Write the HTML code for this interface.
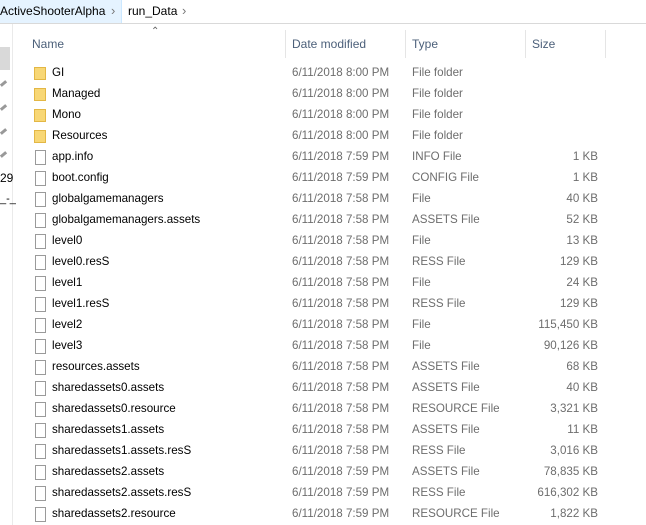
<!DOCTYPE html>
<html><head><style>
body{margin:0;width:646px;height:525px;background:#fff;font-family:"Liberation Sans",sans-serif;font-size:12px;color:#000;position:relative;overflow:hidden}
.abs{position:absolute;white-space:nowrap}
.bar{position:absolute;left:0;top:0;width:646px;height:23px;border-bottom:1px solid #d9d9d9}
.hdr{color:#4c607a}
.sep{position:absolute;top:30px;width:1px;height:28px;background:#e5e5e5}
.row{position:absolute;left:0;height:21px;width:646px;font-size:11.6px}
.row span{position:absolute;top:4px}
.n{left:52px}.d{left:292px;color:#6d6d6d}.t{left:412px;color:#6d6d6d}.s{right:48px;color:#6d6d6d}
.fold{position:absolute;left:34px;top:5px;width:12px;height:13px;background:#f8d775;border:1px solid #e3b745;box-sizing:border-box}
.file{position:absolute;left:35px;top:4px;width:11px;height:15px;border:1px solid #9a9a9a;box-sizing:border-box;background:#fff}
.pin{position:absolute;left:0;width:7px;height:3px;background:#999;transform:rotate(-40deg)}
</style></head><body>
<div class="bar"></div>
<div class="abs" style="left:0;top:0;width:121px;height:23px;background:#e5f3ff;border-right:1px solid #cce8ff"></div>
<div class="abs" style="left:0;top:4px;font-size:12px">ActiveShooterAlpha</div>
<div class="abs" style="left:111px;top:3px;color:#777;font-size:13px">&#8250;</div>
<div class="abs" style="left:128px;top:4px">run_Data</div>
<div class="abs" style="left:182px;top:3px;color:#777;font-size:13px">&#8250;</div>
<div class="abs" style="left:12px;top:24px;width:1px;height:501px;background:#eaeaea"></div>
<div class="abs" style="left:0;top:47px;width:10px;height:23px;background:#d9d9d9"></div>
<div class="pin" style="top:82px"></div><div class="pin" style="top:106px"></div><div class="pin" style="top:130px"></div><div class="pin" style="top:153px"></div>
<div class="abs" style="left:0;top:171px;font-size:12px">29</div>
<div class="abs" style="left:0;top:193px;font-size:11px">_-_</div>
<div class="abs" style="left:151px;top:26px;color:#666;font-size:10px">&#8963;</div>
<div class="abs hdr" style="left:32px;top:37px">Name</div>
<div class="abs hdr" style="left:292px;top:37px">Date modified</div>
<div class="abs hdr" style="left:412px;top:37px">Type</div>
<div class="abs hdr" style="left:532px;top:37px">Size</div>
<div class="sep" style="left:285px"></div><div class="sep" style="left:405px"></div><div class="sep" style="left:525px"></div><div class="sep" style="left:605px"></div>
<div class="row" style="top:62px"><i class="fold"></i><span class="n">GI</span><span class="d">6/11/2018 8:00 PM</span><span class="t">File folder</span></div>
<div class="row" style="top:83px"><i class="fold"></i><span class="n">Managed</span><span class="d">6/11/2018 8:00 PM</span><span class="t">File folder</span></div>
<div class="row" style="top:104px"><i class="fold"></i><span class="n">Mono</span><span class="d">6/11/2018 8:00 PM</span><span class="t">File folder</span></div>
<div class="row" style="top:125px"><i class="fold"></i><span class="n">Resources</span><span class="d">6/11/2018 8:00 PM</span><span class="t">File folder</span></div>
<div class="row" style="top:146px"><i class="file"></i><span class="n">app.info</span><span class="d">6/11/2018 7:59 PM</span><span class="t">INFO File</span><span class="s">1 KB</span></div>
<div class="row" style="top:167px"><i class="file"></i><span class="n">boot.config</span><span class="d">6/11/2018 7:59 PM</span><span class="t">CONFIG File</span><span class="s">1 KB</span></div>
<div class="row" style="top:188px"><i class="file"></i><span class="n">globalgamemanagers</span><span class="d">6/11/2018 7:58 PM</span><span class="t">File</span><span class="s">40 KB</span></div>
<div class="row" style="top:209px"><i class="file"></i><span class="n">globalgamemanagers.assets</span><span class="d">6/11/2018 7:58 PM</span><span class="t">ASSETS File</span><span class="s">52 KB</span></div>
<div class="row" style="top:230px"><i class="file"></i><span class="n">level0</span><span class="d">6/11/2018 7:58 PM</span><span class="t">File</span><span class="s">13 KB</span></div>
<div class="row" style="top:251px"><i class="file"></i><span class="n">level0.resS</span><span class="d">6/11/2018 7:58 PM</span><span class="t">RESS File</span><span class="s">129 KB</span></div>
<div class="row" style="top:272px"><i class="file"></i><span class="n">level1</span><span class="d">6/11/2018 7:58 PM</span><span class="t">File</span><span class="s">24 KB</span></div>
<div class="row" style="top:293px"><i class="file"></i><span class="n">level1.resS</span><span class="d">6/11/2018 7:58 PM</span><span class="t">RESS File</span><span class="s">129 KB</span></div>
<div class="row" style="top:314px"><i class="file"></i><span class="n">level2</span><span class="d">6/11/2018 7:58 PM</span><span class="t">File</span><span class="s">115,450 KB</span></div>
<div class="row" style="top:335px"><i class="file"></i><span class="n">level3</span><span class="d">6/11/2018 7:58 PM</span><span class="t">File</span><span class="s">90,126 KB</span></div>
<div class="row" style="top:356px"><i class="file"></i><span class="n">resources.assets</span><span class="d">6/11/2018 7:58 PM</span><span class="t">ASSETS File</span><span class="s">68 KB</span></div>
<div class="row" style="top:377px"><i class="file"></i><span class="n">sharedassets0.assets</span><span class="d">6/11/2018 7:58 PM</span><span class="t">ASSETS File</span><span class="s">40 KB</span></div>
<div class="row" style="top:398px"><i class="file"></i><span class="n">sharedassets0.resource</span><span class="d">6/11/2018 7:58 PM</span><span class="t">RESOURCE File</span><span class="s">3,321 KB</span></div>
<div class="row" style="top:419px"><i class="file"></i><span class="n">sharedassets1.assets</span><span class="d">6/11/2018 7:58 PM</span><span class="t">ASSETS File</span><span class="s">11 KB</span></div>
<div class="row" style="top:440px"><i class="file"></i><span class="n">sharedassets1.assets.resS</span><span class="d">6/11/2018 7:58 PM</span><span class="t">RESS File</span><span class="s">3,016 KB</span></div>
<div class="row" style="top:461px"><i class="file"></i><span class="n">sharedassets2.assets</span><span class="d">6/11/2018 7:59 PM</span><span class="t">ASSETS File</span><span class="s">78,835 KB</span></div>
<div class="row" style="top:482px"><i class="file"></i><span class="n">sharedassets2.assets.resS</span><span class="d">6/11/2018 7:59 PM</span><span class="t">RESS File</span><span class="s">616,302 KB</span></div>
<div class="row" style="top:503px"><i class="file"></i><span class="n">sharedassets2.resource</span><span class="d">6/11/2018 7:59 PM</span><span class="t">RESOURCE File</span><span class="s">1,822 KB</span></div>
</body></html>
